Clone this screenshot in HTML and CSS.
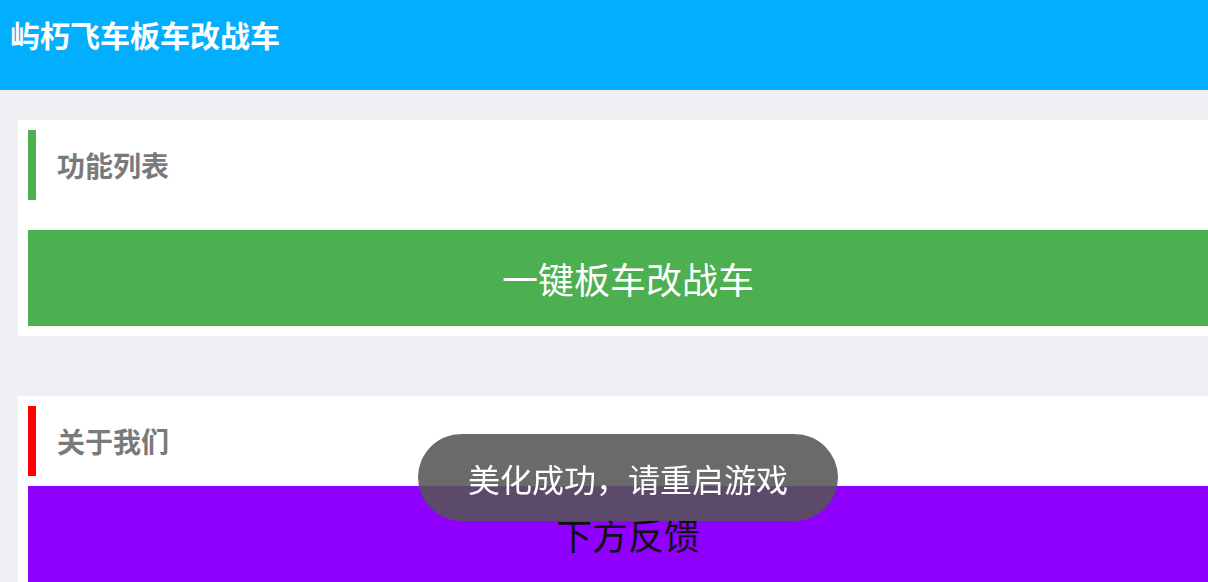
FILE: index.html
```html
<!DOCTYPE html>
<html lang="zh">
<head>
<meta charset="utf-8">
<title>屿朽飞车板车改战车</title>
<link rel="stylesheet" href="styles.css">
</head>
<body>
<header class="topbar">
  <h1 class="app-title">屿朽飞车板车改战车</h1>
</header>
<main class="page">
  <section class="card card-wide">
    <div class="card-head">
      <span class="mark mark-green"></span>
      <h2 class="card-title">功能列表</h2>
    </div>
    <button class="action action-green">一键板车改战车</button>
  </section>
  <section class="card">
    <div class="card-head">
      <span class="mark mark-red"></span>
      <h2 class="card-title">关于我们</h2>
    </div>
    <button class="action action-purple">下方反馈</button>
  </section>
</main>
<div class="toast">美化成功，请重启游戏</div>
</body>
</html>
```
FILE: styles.css
```css
html, body {
  margin: 0;
  padding: 0;
  background: #efeff4;
  overflow: hidden;
  font-family: "Noto Sans CJK SC", "Noto Sans", sans-serif;
}
.topbar {
  height: 90px;
  background: #02aefe;
  padding: 0 10px;
  box-sizing: border-box;
}
.app-title {
  margin: 0;
  color: #fff;
  font-size: 30px;
  font-weight: 700;
  line-height: 68px;
}
.page {
  width: 1220px;
  margin: 30px 0 0 18px;
  display: flex;
  flex-direction: column;
  gap: 60px;
}
.card {
  background: #fff;
  padding: 10px;
  display: flex;
  flex-direction: column;
  gap: 10px;
}
.card-wide {
  gap: 30px;
}
.card-head {
  display: flex;
  align-items: center;
  height: 70px;
}
.mark {
  width: 8px;
  height: 70px;
  flex: none;
}
.mark-green { background: #4caf50; }
.mark-red { background: #ff0000; }
.card-title {
  margin: 0 0 0 21px;
  font-size: 28px;
  font-weight: 700;
  color: #7a7a7a;
  line-height: 1;
}
.action {
  border: 0;
  height: 96px;
  width: 100%;
  font-family: inherit;
  font-size: 36px;
  padding: 0;
  margin: 0;
}
.action-green { background: #4caf50; color: #fff; }
.action-purple { background: #8f00ff; color: #111; }
.toast {
  position: fixed;
  left: 418px;
  top: 434px;
  width: 420px;
  height: 87px;
  border-radius: 44px;
  background: rgba(85, 85, 85, 0.875);
  color: #fff;
  font-size: 32px;
  display: flex;
  align-items: center;
  justify-content: center;
}
```
